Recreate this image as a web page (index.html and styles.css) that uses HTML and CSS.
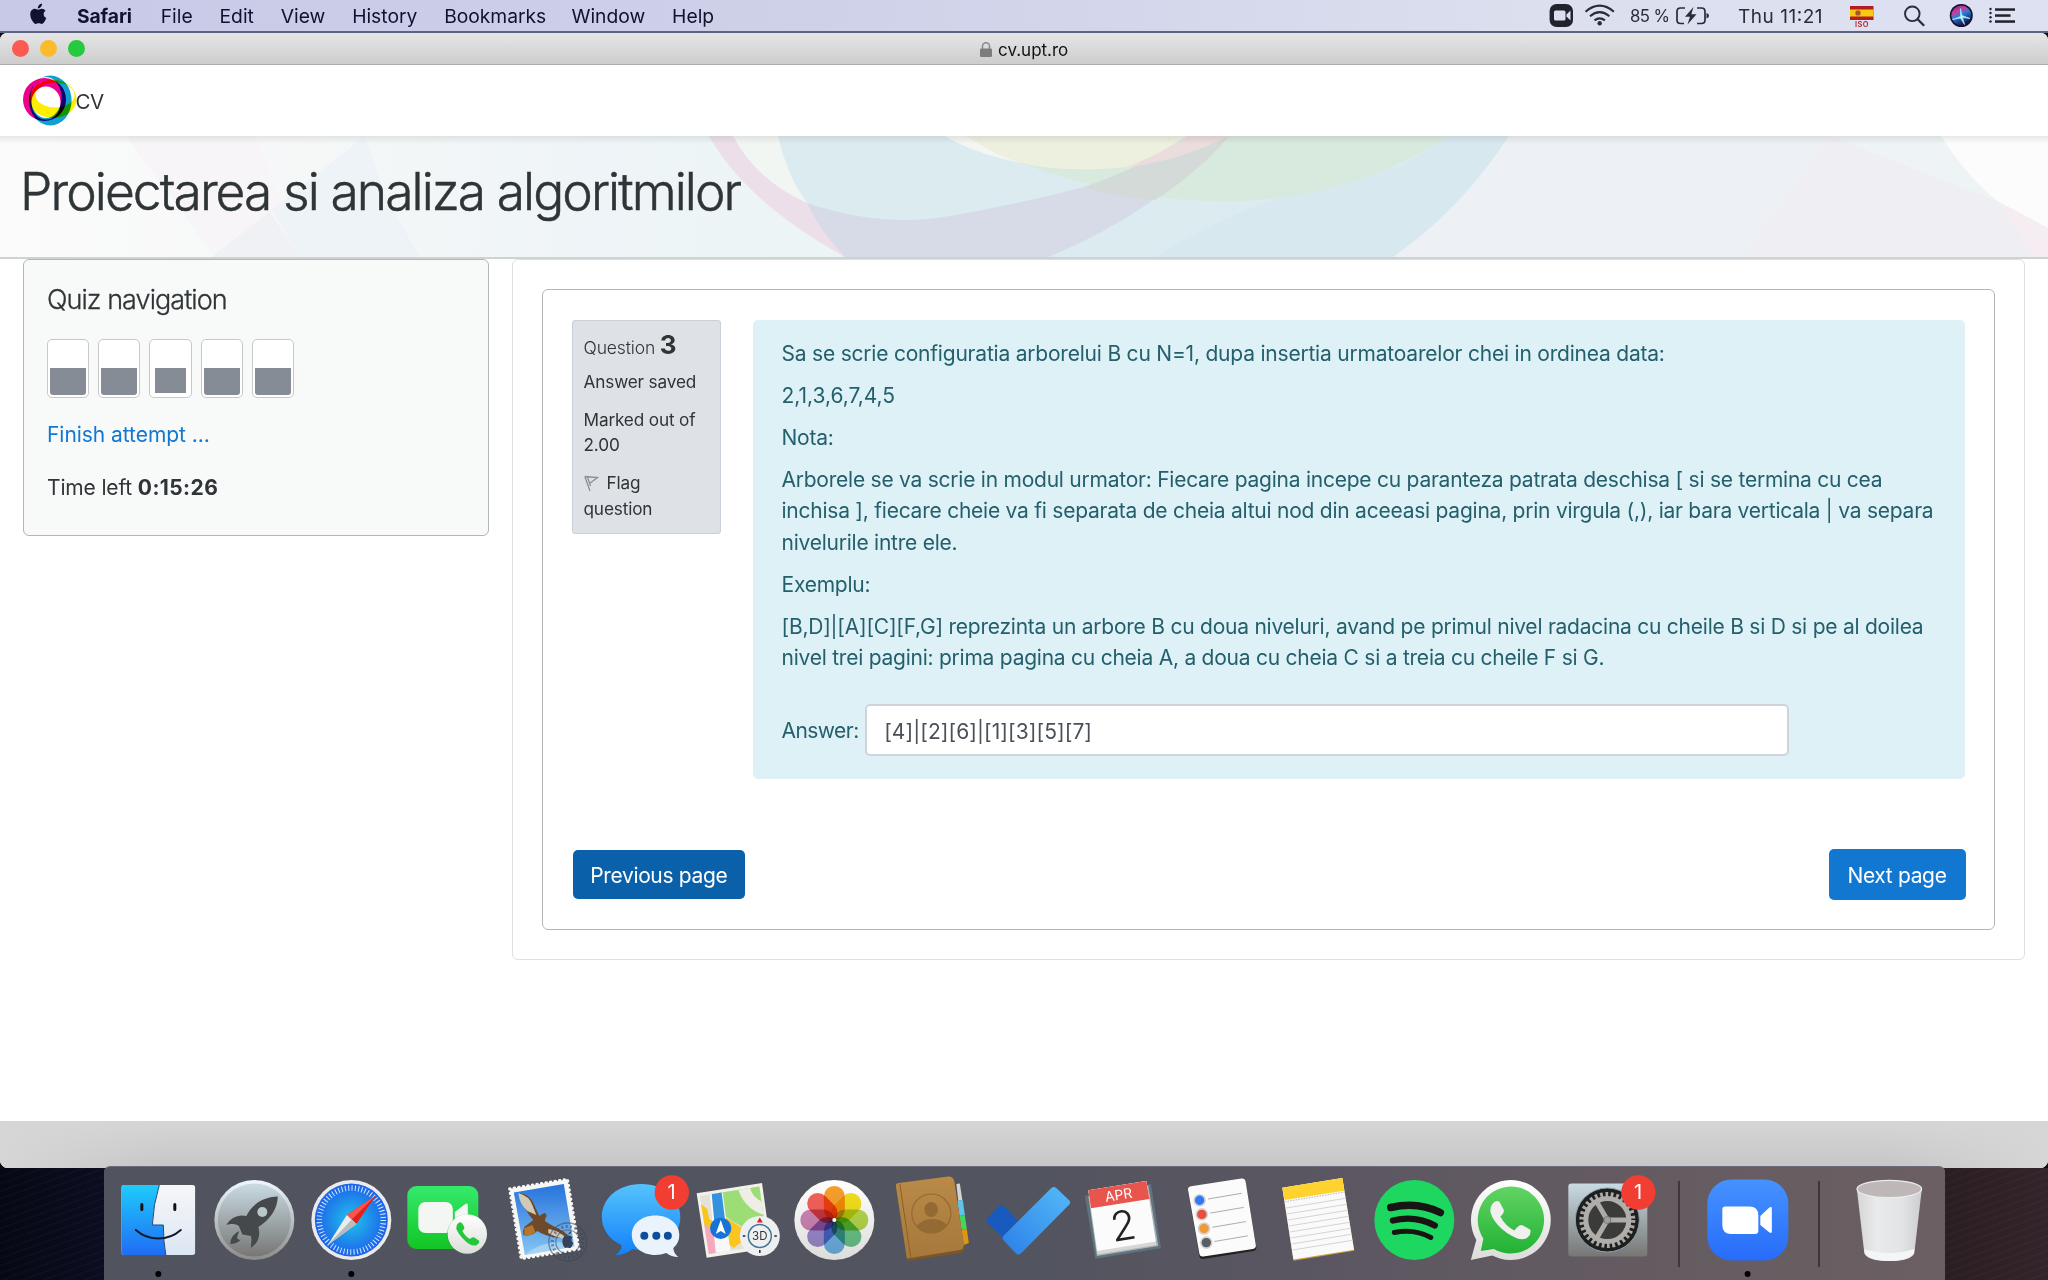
FILE: index.html
```html
<!DOCTYPE html>
<html lang="ro">
<head>
<meta charset="utf-8">
<title>Proiectarea si analiza algoritmilor</title>
<link rel="stylesheet" href="styles.css">
</head>
<body>
<nav class="menubar">
  <svg class="apple" viewBox="0 0 19 24" width="19" height="23"><path d="M13.200 .6c.1 1.500-.5 2.800-1.300 3.700-.8.9-2 1.500-3.100 1.400-.1-1.400.5-2.700 1.300-3.500.8-.9 2.100-1.500 3.100-1.600zM16.800 8.200c-1.200.8-1.900 2-1.900 3.500 0 1.800 1 3.200 2.700 3.900-.5 1.500-1.200 2.900-2.100 4.200-.8 1.100-1.600 2-2.700 2-1.200 0-1.600-.7-3.100-.7s-1.900.7-3.100.7c-1.100 0-1.900-.9-2.700-2C2.200 17.700.9 14.900.9 12c0-3.600 2.200-5.900 4.700-5.900 1.400 0 2.500.9 3.600.9 1 0 2.200-1 3.900-1 1.500 0 2.900.8 3.700 2.200z" fill="#10122e"/></svg>
  <div class="menus"><span class="app">Safari</span><span>File</span><span>Edit</span><span>View</span><span>History</span><span class="wide">Bookmarks</span><span>Window</span><span>Help</span></div>
  <svg class="status" viewBox="1540 0 500 31" width="500" height="31">
    <rect x="1549.600" y="4" width="23.400" height="23" rx="7" fill="#20222c"/><rect x="1554" y="10.500" width="11.500" height="10" rx="1.500" fill="#dbdeee"/><path d="M1566.500 14.500l4-4v10l-4-4z" fill="#dbdeee"/>
    <g fill="none" stroke="#2a2c38" stroke-width="2.100"><path d="M1585.500 11.700q14.200-12 28.400 0M1590 16.200q9.700-8 19.400 0M1594.500 20.300q5.200-4 10.400 0"/></g><circle cx="1599.700" cy="23.300" r="2.200" fill="#2a2c38"/>
    <text x="1630" y="22" class="pct" textLength="40">85 %</text>
    <g fill="none" stroke="#2a2c38" stroke-width="1.700"><path d="M1685 8h-4.500q-3.500 0-3.500 3.500v8.500q0 3.500 3.500 3.500h3.500M1697 8h4.500q3.500 0 3.500 3.500v8.500q0 3.500-3.500 3.500h-4.500"/></g><path d="M1706.500 13q2.500.5 2.500 2.700t-2.500 2.700zM1693.500 7l-8.500 9.800h5l-2.500 7.700 9-10.200h-5.200z" fill="#2a2c38"/>
    <text x="1738" y="22.700" class="clock" textLength="84.500">Thu 11:21</text>
    <rect x="1850" y="6" width="23.500" height="14" fill="#b51c22"/><rect x="1850" y="9.500" width="23.500" height="7" fill="#f8c813"/><rect x="1855.500" y="10.500" width="5" height="5" rx="1.500" fill="#a8532d"/>
    <text x="1855" y="26.900" class="iso" textLength="13.500">ISO</text>
    <circle cx="1912.300" cy="13.800" r="7.300" fill="none" stroke="#2a2c38" stroke-width="1.900"/><path d="M1917.600 19.200l6.500 6.500" stroke="#2a2c38" stroke-width="2.300"/>
    <defs><linearGradient id="siri" x1="0" y1="0" x2=".5" y2="1"><stop offset="0" stop-color="#5b2a8e"/><stop offset=".35" stop-color="#d23a9c"/><stop offset=".55" stop-color="#2b7fd8"/><stop offset="1" stop-color="#1b1450"/></linearGradient></defs>
    <circle cx="1961.300" cy="15.500" r="11.500" fill="#14122b"/><circle cx="1961.300" cy="15.500" r="10" fill="url(#siri)"/><path d="M1952.500 19.500l8-3 0-8 1.500 7 8 3-7.500-1 2 7-4-6.500z" fill="#d8f6ff" stroke="#8fe3f5" stroke-width=".8"/>
    <g fill="#20222c"><circle cx="1990.500" cy="9" r="1.200"/><circle cx="1990.500" cy="13" r="1.200"/><circle cx="1990.500" cy="17.300" r="1.200"/><circle cx="1990.500" cy="21.500" r="1.200"/><rect x="1995" y="8.300" width="20" height="2.500"/><rect x="1995" y="14.300" width="15.500" height="2.500"/><rect x="1995" y="20.300" width="20" height="2.500"/></g>
  </svg>
</nav>
<div class="window">
<div class="titlebar">
  <div class="lights"><i class="red"></i><i class="amber"></i><i class="green"></i></div>
  <div class="address"><svg viewBox="0 0 12 15" width="12" height="15"><rect y="6.500" width="12" height="8.500" rx="1.200" fill="#7c7c7c"/><path d="M2.500 7V4.300a3.500 3.500 0 0 1 7 0V7" fill="none" stroke="#8a8a8a" stroke-width="1.500"/></svg><span>cv.upt.ro</span></div>
</div>
<header class="navbar">
  <svg viewBox="0 0 54 52" width="54" height="52"><g class="rings" fill-rule="evenodd">
    <path fill="#ffee00" d="M6.500 24a23.500 19 0 1 0 47 0a23.500 19 0 1 0-47 0zM12.500 20a19.500 12.500 0 1 0 39 0a19.500 12.500 0 1 0-39 0z"/>
    <path fill="#ec008c" d="M0 24.500a21.500 21.500 0 1 0 43 0a21.500 21.500 0 1 0-43 0zM8.500 28a14.500 16.500 0 1 0 29 0a14.500 16.500 0 1 0-29 0z"/>
    <path fill="#12a0d0" d="M6 25.500a21.300 25 0 1 0 42.600 0a21.300 25 0 1 0-42.600 0zM7.500 22.500a15.500 20.500 0 1 0 31 0a15.500 20.500 0 1 0-31 0z"/></g>
  </svg><span>CV</span>
</header>
<section class="banner">
  <svg class="art" viewBox="0 0 2048 121" width="2048" height="121">
    <defs><linearGradient id="bg"><stop offset="0" stop-color="#fafbfa"/><stop offset=".12" stop-color="#f7f8f8"/><stop offset=".3" stop-color="#eef4f7"/><stop offset=".38" stop-color="#edf4f6"/></linearGradient>
    <linearGradient id="shade" x2="0" y2="1"><stop offset="0" stop-color="#000" stop-opacity=".08"/><stop offset="1" stop-color="#000" stop-opacity="0"/></linearGradient></defs>
    <rect width="2048" height="121" fill="url(#bg)"/>
    <path d="M126 0H255L305 121H215z" fill="#f7f5f7"/><path d="M365 0L212 121H300L270 76z" fill="#f0f1f5"/><path d="M365 0L272 74 300 121H420L385 60z" fill="#edf3f6"/>
    <path d="M733 0Q757 45 807 67L778 0z" fill="#f2f6f2"/>
    <path d="M778 0Q788 42 807 67T843 121H1393Q1460 75 1509 0z" fill="#dbebf0"/>
    <path d="M1155 121Q1260 55 1400 31L1450 0H1509Q1460 75 1393 121z" fill="#d8e8ef"/>
    <path d="M709 0Q745 65 845 121L807 67Q757 45 733 0z" fill="#ecdfe9"/>
    <path d="M845 121Q820 95 807 67 880 92 950 80T1084 51Q1146 30 1187 0H1229Q1150 80 1048 121z" fill="#d7dae7"/>
    <path d="M1021 27Q1130 68 1240 65T1450 0H1187Q1110 45 1021 27z" fill="#d8e9de"/>
    <path d="M1084 51Q1146 30 1187 0H1229Q1200 35 1155 64 1110 60 1084 51z" fill="#d3dad8"/>
    <path d="M945 0Q975 18 1021 27L966 0z" fill="#f4f6f3"/>
    <path d="M966 0Q1000 22 1021 27 1070 38 1137 30L1187 0z" fill="#edf0df"/><path d="M1187 0Q1165 16 1127 31 1180 25 1229 0z" fill="#ebdcdd"/>
    <path d="M1509 0Q1460 75 1393 121H2048V0z" fill="#edf0f4"/><path d="M1830 0L1743 121H2040L1999 66z" fill="#efeff3"/>
    <path d="M1830 0L1999 66 1941 0z" fill="#eef3f5"/><path d="M1941 0Q1970 45 1999 66L2048 92V0z" fill="#fbfcfb"/><path d="M1999 66L2048 92V121H2034z" fill="#f6edf2"/>
    <rect width="2048" height="8" fill="url(#shade)"/>
  </svg>
  <h1>Proiectarea si analiza algoritmilor</h1>
</section>
<main class="page">
  <aside class="quiznav">
    <h2>Quiz navigation</h2>
    <div class="buttons"><a></a><a></a><a class="current"></a><a></a><a></a></div>
    <a class="finish">Finish attempt ...</a>
    <p class="time">Time left <b>0:15:26</b></p>
  </aside>
  <section class="region">
    <div class="card">
      <div class="question">
        <div class="info">
          <h3>Question <b>3</b></h3>
          <p>Answer saved</p>
          <p>Marked out of<br>2.00</p>
          <p><svg viewBox="0 0 15 17" width="15" height="17"><path d="M.8 1.500L13.500 2.500 5.500 8.500M.8 1.500L6 16M3.600 2.500L6.500 11" fill="none" stroke="#8b8e92" stroke-width="1.300"/></svg>Flag<br>question</p>
        </div>
        <div class="formulation">
          <p class="first">Sa se scrie configuratia arborelui B cu N=1, dupa insertia urmatoarelor chei in ordinea data:</p>
          <p class="seq">2,1,3,6,7,4,5</p>
          <p>Nota:</p>
          <p>Arborele se va scrie in modul urmator: Fiecare pagina incepe cu paranteza patrata deschisa [ si se termina cu cea<br>inchisa ], fiecare cheie va fi separata de cheia altui nod din aceeasi pagina, prin virgula (,), iar bara verticala | va separa<br>nivelurile intre ele.</p>
          <p>Exemplu:</p>
          <p>[B,D]|[A][C][F,G] reprezinta un arbore B cu doua niveluri, avand pe primul nivel radacina cu cheile B si D si pe al doilea<br>nivel trei pagini: prima pagina cu cheia A, a doua cu cheia C si a treia cu cheile F si G.</p>
          <div class="answer"><label>Answer:</label><div class="field">[4]|[2][6]|[1][3][5][7]</div></div>
        </div>
      </div>
      <div class="actions"><a class="btn prev">Previous page</a><a class="btn next">Next page</a></div>
    </div>
  </section>
</main>
<footer class="bottombar"></footer>
</div>
<div class="desktop">
<div class="dock">
  <svg class="icon" viewBox="-48.300 -54 96.600 114">
    <defs>
      <linearGradient id="fblue" x2="0" y2="1"><stop offset="0" stop-color="#1fcbfb"/><stop offset="1" stop-color="#1f6df4"/></linearGradient>
      <linearGradient id="fwhite" x2="0" y2="1"><stop offset="0" stop-color="#f7f7f9"/><stop offset="1" stop-color="#dbe6f3"/></linearGradient>
      <linearGradient id="steel" x2="0" y2="1"><stop offset="0" stop-color="#c9dbe3"/><stop offset="1" stop-color="#777674"/></linearGradient>
      <linearGradient id="rim" x2="0" y2="1"><stop offset="0" stop-color="#eef8fc"/><stop offset="1" stop-color="#8c8c8a"/></linearGradient>
      <radialGradient id="sea"><stop offset="0" stop-color="#20c3ea"/><stop offset="1" stop-color="#1d62ea"/></radialGradient>
      <linearGradient id="lime" x2="0" y2="1"><stop offset="0" stop-color="#35ea6c"/><stop offset="1" stop-color="#12c524"/></linearGradient>
      <linearGradient id="sky" x2="0" y2="1"><stop offset="0" stop-color="#2673dc"/><stop offset="1" stop-color="#85c6f4"/></linearGradient>
      <linearGradient id="msg" x2="0" y2="1"><stop offset="0" stop-color="#55c3fc"/><stop offset="1" stop-color="#1380fb"/></linearGradient>
      <linearGradient id="disc" x2="0" y2="1"><stop offset="0" stop-color="#fff"/><stop offset="1" stop-color="#dcdcda"/></linearGradient>
      <linearGradient id="tan" x2="0" y2="1"><stop offset="0" stop-color="#b98a48"/><stop offset="1" stop-color="#a6783a"/></linearGradient>
      <linearGradient id="tick" x1="1" y1="0" x2="0" y2="1"><stop offset="0" stop-color="#55baf8"/><stop offset="1" stop-color="#2a7fe8"/></linearGradient>
      <linearGradient id="wa" x2="0" y2="1"><stop offset="0" stop-color="#62d463"/><stop offset="1" stop-color="#22b235"/></linearGradient>
      <linearGradient id="zm" x2="0" y2="1"><stop offset="0" stop-color="#4592ff"/><stop offset="1" stop-color="#276cfa"/></linearGradient>
      <linearGradient id="bin"><stop offset="0" stop-color="#d5d5d6"/><stop offset=".3" stop-color="#e9eaeb"/><stop offset=".7" stop-color="#e2e3e5"/><stop offset="1" stop-color="#cccdd0"/></linearGradient>
      <clipPath id="fr"><rect x="-37" y="-35" width="74" height="70" rx="3"/></clipPath>
    </defs>
    <g clip-path="url(#fr)"><rect x="-37" y="-35" width="74" height="70" fill="url(#fwhite)"/><path d="M-37-35H1Q-5-16-6 5H5Q5 22 7.500 35H-37z" fill="url(#fblue)"/><path d="M1-35Q-5-16-6 5H5Q5 22 7.500 35" fill="none" stroke="#244a78" stroke-width="1"/></g>
    <path d="M-16.500-15.500v5M16.500-15.500v5" stroke="#111" stroke-width="3" stroke-linecap="round"/><path d="M-22.500 10Q-13 18.500 0 18.500T22.500 10" fill="none" stroke="#131a2a" stroke-width="2" stroke-linecap="round"/><circle cy="54" r="3" fill="#000"/>
  </svg>
  <svg class="icon" viewBox="-48.300 -54 96.600 114"><circle r="40" fill="url(#rim)"/><circle r="36.500" fill="url(#steel)"/><path d="M23.500-23.500C7-23-3-14-8-4-16-6-24-2-28 5-22 3-18 4-15.500 6L-12 14.500-3.500 16C-2 20-3.500 24-3.500 28 4 23 6.500 15 4 7 15 0 23-10 23.500-23.500z" fill="#45494b"/><path d="M-15 11Q-24 15-24 24-15 24-12 17l-2 3-3-1 0-3z" fill="#45494b"/><circle cx="8" cy="-8" r="5" fill="#b9c6cb"/></svg>
  <svg class="icon" viewBox="-48.300 -54 96.600 114"><circle r="40" fill="#ecebeb"/><circle r="36.500" fill="url(#sea)"/><circle r="32" fill="none" stroke="#d5ebfb" stroke-width="5.500" stroke-dasharray="1 2.351"/><path d="M24.500-24.500L5 4-4.500-5z" fill="#e2201c"/><path d="M24.500-24.500L-4.500-5 0 0z" fill="#ff5248"/><path d="M-23.500 25L-4.500-5 5 4z" fill="#ececec"/><path d="M-23.500 25L0 0 5 4z" fill="#b9babc"/><circle cy="54" r="3" fill="#000"/></svg>
  <svg class="icon" viewBox="-48.300 -54 96.600 114"><rect x="-40" y="-34" width="71" height="63" rx="9" fill="url(#lime)"/><rect x="-29" y="-18" width="34.500" height="31" rx="7" fill="#f4f6f3"/><path d="M7.500-8L18-16q2.500-1.500 2.500 1.500V10L7.500 2z" fill="#f4f6f3"/><circle cx="20" cy="14.500" r="20.300" fill="#2a7d3a" opacity=".4"/><circle cx="20" cy="14" r="19.700" fill="url(#disc)"/><path d="M10 4q3-3 4.500-1l2.500 4q.5 2-2 4 3.500 6 7.500 8 2.500-2.500 4.500-1.500l4.500 3q1.500 2-2 4.500-5 2-11.500-4T9 9q0-3.500 1-5z" fill="#22c83a"/></svg>
  <svg class="icon" viewBox="-48.300 -54 96.600 114"><path d="M-34.500-31L23-40.500 34.500 29-23 38.500z" fill="#f7f7f5" stroke="#f7f7f5" stroke-width="3.500" stroke-linecap="round" stroke-dasharray=".1 4.500"/><path d="M-30.500-27.500L19.500-36 30 26.500-19.500 35z" fill="url(#sky)"/><path d="M-17 33Q2 18 29 24L30 26.500-19.500 35z" fill="#bfe0f5" opacity=".6"/><path d="M-25-27q10 1 14 10l6 13q4-3 6-3l1.500 3q-2 2-2 5 6 4 18 10l9 7-13 0Q0 16-7 11q-7 6-14 4-1-4 1-8l9-7q-9-9-14-27z" fill="#6d4a2a"/><path d="M-26-27q11 3 14 12l4 10-9-4q-8-7-9-18zM4 9q10 1 19 10-12-1-19-6z" fill="#d2c8b6"/><path d="M-20 8l8-3 3 7q-6 5-11 3z" fill="#b5762d"/><g fill="none" stroke="#3b4659" opacity=".55"><circle cx="23.500" cy="22" r="19" stroke-width="1.400"/><circle cx="23.500" cy="22" r="12" stroke-width="1.200"/><circle cx="23.500" cy="22" r="15.500" stroke-width="3" stroke-dasharray="2 2.400"/></g><path d="M24 14q2-3 3-3 0 3-3 3.500zM23 16q3-1 5 1-2 4 1 6-2 6-4 5-2-1-4 0-3-2-3-7 1-6 5-5z" fill="#34435c"/></svg>
  <svg class="icon" viewBox="-48.300 -54 96.600 114"><path d="M0-36C24-36 39-21 39-3S24 30 0 30q-5 0-9-1Q-16 35-26 35-19 30-20 25C-33 19-39.500 8-39.500-3-39.500-21-24-36 0-36z" fill="url(#msg)"/><path d="M14-4.500C28-4.500 38 4 38 15q0 8-6 13 0 5 5 9-7 0-12-4-5 2-11 2C0 35-9.500 26-9.500 15S0-4.500 14-4.500z" fill="#eaf3fb"/><g fill="#0b4f9c"><circle cx="3" cy="15.700" r="4"/><circle cx="15" cy="15.700" r="4"/><circle cx="26.500" cy="15.700" r="4"/></g><circle cx="30.500" cy="-27.500" r="17.200" fill="#f23d33"/><text x="30.200" y="-20.700" class="badge">1</text></svg>
  <svg class="icon" viewBox="-48.300 -54 96.600 114"><path d="M-40.700-26.700L24.700-37 33.700 28-30.700 37.700z" fill="#f2f1ec"/><clipPath id="mp"><path d="M-37.500-24L22-33.500 30.500 25-28.500 34z"/></clipPath><g clip-path="url(#mp)"><rect x="-45" y="-45" width="90" height="90" fill="#e4e1d8"/><path d="M-19-28L40-37V20Q5 10-12-4z" fill="#9ddd76"/><path d="M0-34Q6-8 35-3V-16Q14-18 12-36z" fill="#efede6"/><path d="M-40 3L-24 2-18 38H-40z" fill="#f6a9bd"/><path d="M-39-18L-30-11-28-1 6 21-4 28-36 2z" fill="#fbc520"/><path d="M-15-5L12 13 0 25-14 14z" fill="#fbc520"/><path d="M-28-30h13l9 68h-15z" fill="#f8f8f8"/><path d="M-26-30h10l4 32h-11z" fill="#3491df"/></g><circle cx="-16.600" cy="8.300" r="10.600" fill="#1873d8"/><path d="M-16.600 0l5 14-5-3-5 3z" fill="#fff"/><circle cx="22.500" cy="16" r="20" fill="#eeeff0"/><circle cx="22.500" cy="16" r="11.500" fill="none" stroke="#417995" stroke-width="1.500"/><path d="M22.500-2.500l3 5h-6z" fill="#e02020"/><path d="M5.500 16h2.500M37 16h2.500M22.500 30v3" stroke="#222" stroke-width="1.500"/><text x="22.500" y="20" class="deg">3D</text></svg>
  <svg class="icon" viewBox="-48.300 -54 96.600 114"><circle r="40" fill="url(#disc)"/><g class="petals"><rect x="-10.500" y="-34" width="21" height="34" rx="10.500" fill="#f9a02c"/><rect x="-10.500" y="-34" width="21" height="34" rx="10.500" fill="#f5e01c" transform="rotate(45)"/><rect x="-10.500" y="-34" width="21" height="34" rx="10.500" fill="#b5d94c" transform="rotate(90)"/><rect x="-10.500" y="-34" width="21" height="34" rx="10.500" fill="#6cc68c" transform="rotate(135)"/><rect x="-10.500" y="-34" width="21" height="34" rx="10.500" fill="#6fb4ea" transform="rotate(180)"/><rect x="-10.500" y="-34" width="21" height="34" rx="10.500" fill="#9d8bd0" transform="rotate(225)"/><rect x="-10.500" y="-34" width="21" height="34" rx="10.500" fill="#cf86b8" transform="rotate(270)"/><rect x="-10.500" y="-34" width="21" height="34" rx="10.500" fill="#f5625a" transform="rotate(315)"/></g><circle r="2" fill="#fff"/></svg>
  <svg class="icon" viewBox="-48.300 -54 96.600 114"><path d="M25-36l3.500-.5L31-20l-4 1z" fill="#d4d4d2"/><path d="M26-19l5.500-1L33.500-5 28-4z" fill="#5fc4ea"/><path d="M28-4l5.500-1L35.500 9 30 10z" fill="#46d35f"/><path d="M30 10l5.500-1L37.500 23 30 26z" fill="#dc960f"/><path d="M-35.500-34.500q0-2 3-2.500L17-43.500q5 0 6 5L33 28q0 4-4 5L-24 41z" fill="#7d5626"/><path d="M-35.500-34.500q0-2 3-2.500L17-43.500q5 0 6 5L32.500 25q0 4-4 5L-24.500 38.500z" fill="url(#tan)"/><path d="M-31.500-36L-20.500 37.500" stroke="#8a6029" stroke-width="1"/><g transform="rotate(-2 0 -6.500)"><circle cy="-6.500" r="19.500" fill="none" stroke="#94692f" stroke-width="1.200"/><ellipse cy="-10.500" rx="6.800" ry="7.500" fill="#936a33"/><path d="M-15 5Q-8-1 0-1T15 5Q9 13 0 13T-15 5z" fill="#936a33"/></g></svg>
  <svg class="icon" viewBox="-48.300 -54 96.600 114"><path d="M-40.500-1L-28-14.500q2-1.500 4 0L-9 .7-24.700 17.300-40.500 2.500q-1.500-2 0-3.500z" fill="#185abd"/><path d="M-24 16L24-32q2.500-2 5 0L42-19.500q1.500 2 0 4L-6.500 33.500q-2.500 2-5 0L-24 20q-1.500-2 0-4z" fill="url(#tick)"/></svg>
  <svg class="icon" viewBox="-48.300 -54 96.600 114"><path d="M-39.500-24.300L26.700-36 36.700 28.300-29 38.700z" fill="#5f727d"/><path d="M-36-24L24-35 34 26-27.500 36z" fill="#a9b4ba"/><path d="M-36-29.700L22-39 32 25-26.700 34.500z" fill="#d6d6d4"/><path d="M-36-29.700L22-39 31.500 21.500-27.200 31z" fill="#fbfbfb"/><path d="M-36-29.700L22-39 25-21-33.300-11.700z" fill="#e8554c"/><text transform="translate(-5 -20.200) rotate(-9)" class="apr">APR</text><text transform="translate(1 20) rotate(-9)" class="day">2</text></svg>
  <svg class="icon" viewBox="-48.300 -54 96.600 114"><path d="M-33.300-29q-.5-3 3-3.800L20-40.500q3.500-.5 4.300 3L35 27q.5 3-3 4L-18 39q-3.500.5-4-3z" fill="#222"/><path d="M-33.300-30q-.5-3 3-3.800L20-41.500q3.500-.5 4.300 3L34.500 25q.5 3-3 4L-18 36.500q-3.500.5-4-3z" fill="#fbfbfb"/><g stroke="#d3d3d3" stroke-width="1.600"><circle cx="-21.700" cy="-19.700" r="5.500" fill="#3478f6"/><circle cx="-19.500" cy="-5.600" r="5.500" fill="#eb4e3d"/><circle cx="-17.300" cy="8.500" r="5.500" fill="#f09a37"/><circle cx="-15" cy="22.600" r="5.500" fill="#585d66"/></g><path d="M-13.300-21l33.600-5.700M-11.200-6.900l33.600-5.700M-9.100 7.300l33.600-5.700M-7 21.500l33.600-5.700" stroke="#adadad" stroke-width="1"/></svg>
  <svg class="icon" viewBox="-48.300 -54 96.600 114"><path d="M-35-32.300L25-42 37 30.700-23.700 40.700z" fill="#c9a43b"/><path d="M-35-32.300L25-42 36.700 29.700-24 39.500z" fill="#fafafa"/><path d="M-35-32.300L25-42 27-29.300-32.700-20z" fill="#fed22f"/><path d="M-32.400-18.300l59.800-9.700" stroke="#aaa" stroke-width=".8" stroke-dasharray="1.500 1.200"/><path d="M-31.400-12l59.800-9.700M-30.400-6l59.800-9.700M-29.400 0l59.800-9.700M-28.400 6l59.800-9.700M-27.500 12l59.800-9.700M-26.600 18l59.800-9.700M-25.700 24l59.800-9.700M-24.800 30l59.800-9.700" stroke="#cfcfcf" stroke-width=".9"/></svg>
  <svg class="icon" viewBox="-48.300 -54 96.600 114"><circle r="40" fill="#1ed760"/><g fill="none" stroke="#191414" stroke-linecap="round"><path d="M-23.500-12.500Q3-19 26-7.500" stroke-width="7.500"/><path d="M-21.500.5Q1-5 20.500 5.500" stroke-width="6.200"/><path d="M-20 12.500Q0 8.500 16.500 17.500" stroke-width="5"/></g></svg>
  <svg class="icon" viewBox="-48.300 -54 96.600 114"><path d="M0-40A40 40 0 1 1-18 35.500L-39.500 40-34 20A40 40 0 0 1 0-40z" fill="url(#disc)"/><path d="M0-33.500A33.500 33.500 0 1 1-16.500 29L-29.500 31-27 18.500A33.500 33.500 0 0 1 0-33.500z" fill="url(#wa)"/><path d="M-18-16q3-4 7-2.500l4.500 8.500q.5 3-3.500 6.500Q-5 6 4 10.500q3-3.500 5-5 2-1 4 .2l7 4q1 4.500-2.500 7.500-4 3.500-11 1Q-4 14-12.500 5-20-4-20-9.500q0-4 2-6.500z" fill="#f0f0ef"/></svg>
  <svg class="icon" viewBox="-48.300 -54 96.600 114"><rect x="-39" y="-36.500" width="79" height="73" rx="3" fill="url(#steel)"/><circle r="32" fill="#1f1f1f"/><circle r="32" fill="none" stroke="#8ba1b0" stroke-width="1"/><circle r="25.500" fill="none" stroke="#aaa8a4" stroke-width="5" stroke-dasharray="2.800 2.540"/><circle r="21.500" fill="#3b3b3a" stroke="#b0aeaa" stroke-width="5"/><path d="M0 0H21M0 0L-10.500-18M0 0L-10.500 18" stroke="#aeaca8" stroke-width="5"/><circle r="3.500" fill="#9aa0a4" stroke="#777"/><circle cx="31" cy="-27.500" r="17.200" fill="#f23d33"/><text x="30.700" y="-20.700" class="badge">1</text></svg>
  <i class="sep"></i>
  <svg class="icon" viewBox="-48.300 -54 96.600 114"><rect x="-40" y="-40.500" width="81" height="81" rx="24" fill="url(#zm)"/><path d="M-22-13.500H2q9 0 9 9V11q0 3-3 3h-24q-9 0-9-9v-15.500q0-3 3-3zM13-4L21.500-12q3-2 3 .5v23q0 2.500-3 .5L13 5z" fill="#fff"/><circle cx=".3" cy="54" r="3" fill="#000"/></svg>
  <i class="sep last"></i>
  <svg class="icon" viewBox="-48.300 -54 96.600 114"><path d="M-32.500-31L-25 33Q-22 41 0 41T25 33L32.500-31z" fill="url(#bin)"/><path d="M-25 29Q0 37 25 29L24.500 34Q18 41 0 41T-24.500 34z" fill="#f4f5f6"/><ellipse cy="-31" rx="32.300" ry="8.700" fill="#bdb7b8" stroke="#ebebec" stroke-width="1.300"/></svg>
</div>
</div>
</body>
</html>
```
FILE: styles.css
```css
*{box-sizing:border-box}
body{margin:0;width:2048px;height:1280px;overflow:hidden;background:#0a0c1c;color:#2f3437;font-family:Inter,"Liberation Sans",sans-serif;font-size:21px;display:flex;flex-direction:column}
h1,h2,h3,p{margin:0;font-weight:400}
svg{display:block;flex:none}
text{font-family:Inter,"Liberation Sans",sans-serif}

.menubar{height:33px;flex:none;display:flex;border-bottom:2px solid #5e6480;background:linear-gradient(90deg,#c7c9e7,#cfd1e9 40%,#dbdfee 75%,#dde1f1)}
.apple{margin:3px 0 0 29px}
.menus{display:flex;gap:26.800px;margin-left:29px;font-size:19.300px;line-height:32px;color:#10122e;white-space:nowrap}
.menus .app{font-weight:700;letter-spacing:-.1px;margin-right:2px}
.menus .wide{letter-spacing:-.05px;margin-right:-1.500px}
.status{margin-left:auto;margin-right:8px}
.pct{font-size:16.800px;fill:#2a2c38}
.clock{font-size:19px;fill:#2a2c38}
.iso{font-size:7.500px;font-weight:600;fill:#b8202a}

.window{height:1135px;flex:none;display:flex;flex-direction:column;background:#fff;border-radius:7px 7px 8px 8px;overflow:hidden}
.titlebar{height:32px;flex:none;display:flex;align-items:center;background:linear-gradient(#e6e6e6,#cdcdcd);border-bottom:1.500px solid #ababab}
.lights{display:flex;gap:11.200px;padding-left:11.500px;width:980px;height:17px}
.lights i{width:17.200px;height:17.200px;border-radius:50%}
.red{background:#fc5b52}
.amber{background:#fcbb2d}
.green{background:#27c93f}
.address{display:flex;align-items:center;gap:6px;font-size:17px;color:#111;line-height:30px;padding-top:2px}
.navbar{height:71px;flex:none;display:flex;align-items:center;padding-left:22.500px;background:#fff}
.navbar span{font-size:20.600px;letter-spacing:-.6px;line-height:28px;margin:2px 0 0 -1px}
.rings path{mix-blend-mode:multiply}
.banner{height:123px;flex:none;display:grid;border-bottom:2px solid #cfd2d2}
.banner>*{grid-area:1/1}
.banner h1{font-size:51.500px;font-weight:300;-webkit-text-stroke:.5px;letter-spacing:-1.910px;line-height:60px;padding:25px 0 0 20px;z-index:1}

.page{flex:1;display:flex;align-items:flex-start;gap:23px;padding:0 23px;min-height:0}
.quiznav{width:466px;height:277px;border:1px solid #b4b6b6;border-radius:6px;background:#f8faf9;padding:23px 23px;display:flex;flex-direction:column}
.quiznav h2{font-size:27px;font-weight:300;-webkit-text-stroke:.3px;letter-spacing:-.95px;line-height:34px}
.buttons{display:flex;gap:9px;margin:22px 0 20px}
.buttons a{width:42.200px;height:59px;border:1.500px solid #c6c8ca;border-radius:5px;background:#fff;padding:28px 2px 2px}
.buttons a::before{content:"";display:block;height:100%;background:#868c95;border-radius:0 0 3px 3px}
.buttons .current{padding:28px 4.500px 4.500px}
.buttons .current::before{border-radius:0}
.finish{color:#1177d1;line-height:32px;letter-spacing:-.05px;padding-top:.5px}
.time{line-height:32px;margin-top:21px;letter-spacing:-.15px}
.time b{letter-spacing:.4px}

.region{width:1513px;height:701px;border:1px solid #dedfdf;border-radius:6px;padding:29px}
.card{width:1453px;height:641px;border:1px solid #b4b6b6;border-radius:6px;padding:30px 29px}
.question{display:flex;align-items:flex-start;gap:32px}
.info{width:149px;height:213.500px;border:1.500px solid #cad0d7;border-radius:3px;background:#dee1e6;padding:9px 10.500px;font-size:17.200px;letter-spacing:-.15px;line-height:25.500px;white-space:nowrap}
.info h3{font-size:17.500px;font-weight:300;line-height:30px;margin-bottom:6px;letter-spacing:-.15px}
.info h3 b{font-size:26px;font-weight:700}
.info p{margin-bottom:12.300px}
.info svg{display:inline-block;vertical-align:-3px;margin-right:8px}
.formulation{width:1212px;height:459px;border-radius:5px;background:#def1f7;color:#245f6c;padding:18px 0 0 28.500px;line-height:31.330px;letter-spacing:-.24px;white-space:nowrap}
.formulation p{margin-bottom:10.670px}
.formulation .first{letter-spacing:-.21px}
.formulation .seq{letter-spacing:-.03px}
.answer{display:flex;align-items:center;gap:6.500px;margin-top:31px}
.answer label{letter-spacing:-.55px}
.field{width:924px;height:52px;border:2px solid #ced4da;border-radius:5px;background:#fff;color:#495057;line-height:51px;padding-left:17px;letter-spacing:.05px}
.actions{display:flex;justify-content:space-between;margin:70px -.5px 0 .5px}
.btn{height:51px;line-height:53px;border-radius:5px;color:#fff;text-align:center;letter-spacing:-.35px}
.prev{width:172.500px;height:49px;line-height:51.500px;margin-top:1px;background:#0b60aa}
.next{width:137px;background:#1177d1}
.bottombar{height:47px;flex:none;background:linear-gradient(90deg,#d6d6d6 0,#d6d6d600 8%,#d6d6d600 92%,#d6d6d6),linear-gradient(#d6d6d6,#c6c6c6)}

.desktop{flex:1;padding:0 103.500px;background:repeating-linear-gradient(160deg,#ffffff05 0 2px,#0000 2px 7px),linear-gradient(90deg,#050814,#0c0d20 5%,#0c0d20 50%,#24181a 90%,#32242a);display:flex;align-items:flex-start}
.dock{width:1841px;height:115px;margin-top:-2px;display:flex;padding-left:6px;border-radius:6px 6px 0 0;border-top:1px solid #6b6c76;background:linear-gradient(90deg,#51535f,#52545f 50%,#5a5661 65%,#625a61 78%,#6b5f62)}
.icon{width:96.650px;height:114px;margin-top:-1px}
.petals rect{mix-blend-mode:multiply}
.badge{font-size:20px;fill:#fff;text-anchor:middle}
.deg{font-size:11.500px;fill:#333;text-anchor:middle}
.apr{font-size:14px;fill:#fff;text-anchor:middle}
.day{font-size:41px;font-weight:300;fill:#222;text-anchor:middle}
.sep{flex:none;width:2px;height:86px;margin:14px 19px 0 22.500px;background:#40353c}
.last{margin-right:20.500px}
```
